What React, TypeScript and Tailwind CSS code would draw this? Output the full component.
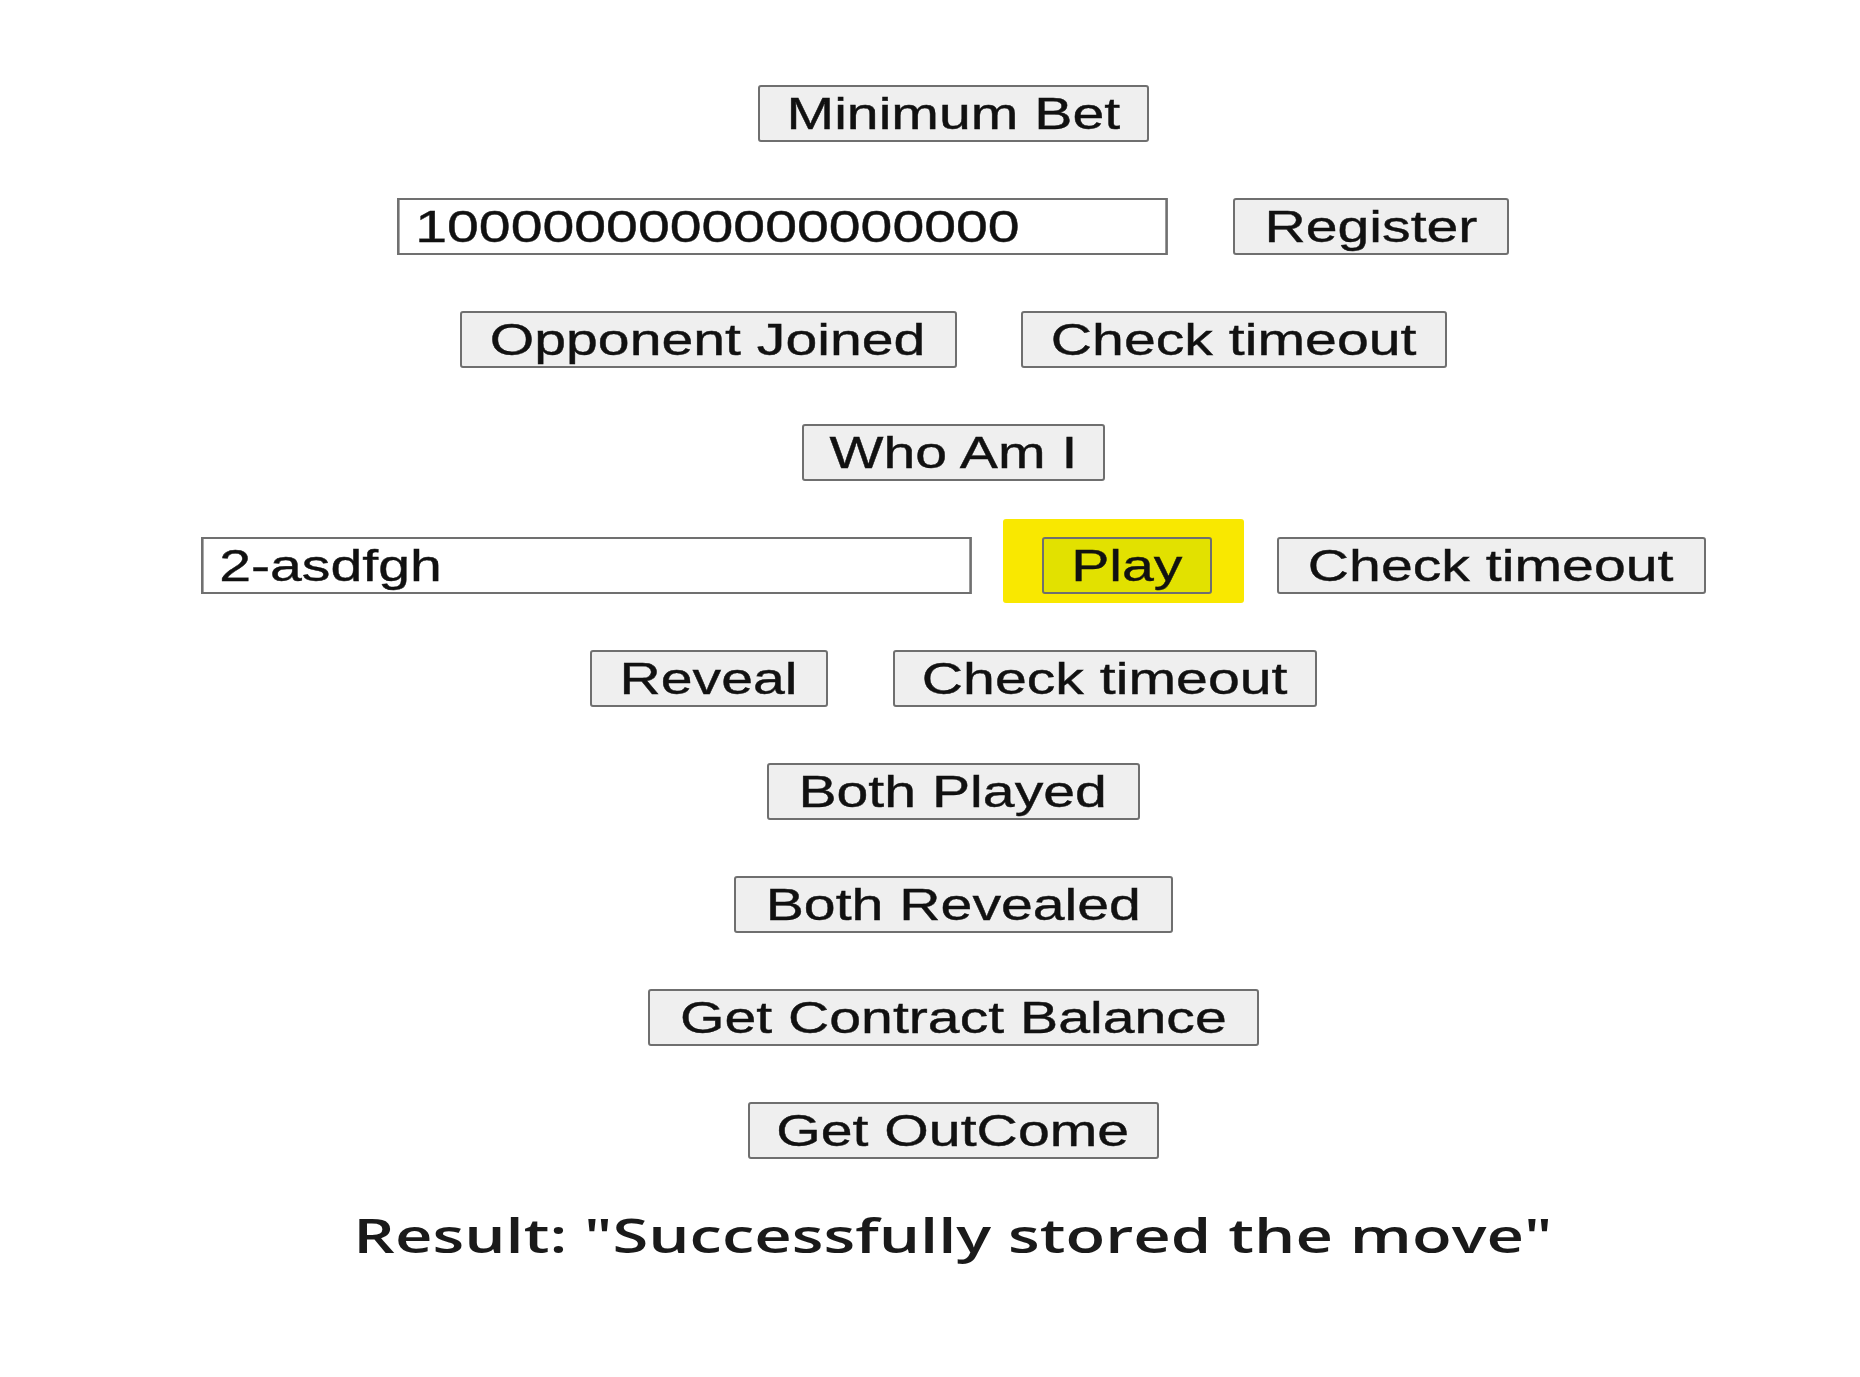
import React from 'react';

type BtnProps = {
  label: string;
  width: string;
  highlighted?: boolean;
};

const Btn: React.FC<BtnProps> = ({ label, width, highlighted }) => (
  <button
    className={`${width} h-[57px] flex items-center justify-center rounded-[3px] border-2 border-[#6f6f6f] ${
      highlighted ? 'bg-[#e2e100]' : 'bg-[#efefef]'
    } text-[44px] leading-none text-[#111] [-webkit-text-stroke:0.4px_#111] font-['Liberation_Sans',Arial,sans-serif]`}
  >
    <span className="inline-block whitespace-nowrap scale-x-[1.3]">{label}</span>
  </button>
);

const Field: React.FC<{ value: string }> = ({ value }) => (
  <div className="w-[771px] h-[57px]">
    <input
      readOnly
      defaultValue={value}
      className="w-[593px] h-[57px] origin-left scale-x-[1.3] border-2 border-[#707070] bg-white pl-[12px] text-[44px] leading-none text-[#111] [-webkit-text-stroke:0.4px_#111] outline-none font-['Liberation_Sans',Arial,sans-serif]"
    />
  </div>
);

export default function App() {
  return (
    <div className="min-h-[1377px] bg-white pt-[85px] pl-[46px] flex flex-col items-center gap-[56px]">
      <Btn label="Minimum Bet" width="w-[391px]" />

      <div className="flex items-center gap-[65px]">
        <Field value="1000000000000000000" />
        <Btn label="Register" width="w-[276px]" />
      </div>

      <div className="flex items-center gap-[64px]">
        <Btn label="Opponent Joined" width="w-[497px]" />
        <Btn label="Check timeout" width="w-[426px]" />
      </div>

      <Btn label="Who Am I" width="w-[303px]" />

      <div className="flex items-center gap-[65px]">
        <Field value="2-asdfgh" />
        {/* highlighter mark around Play */}
        <div className="relative ml-[5px]">
          <span className="absolute -left-[39px] -right-[32px] -top-[18px] -bottom-[9px] bg-[#f9e800] rounded-[3px]" />
          <div className="relative">
            <Btn label="Play" width="w-[170px]" highlighted />
          </div>
        </div>
        <Btn label="Check timeout" width="w-[429px]" />
      </div>

      <div className="flex items-center gap-[65px]">
        <Btn label="Reveal" width="w-[238px]" />
        <Btn label="Check timeout" width="w-[424px]" />
      </div>

      <Btn label="Both Played" width="w-[373px]" />
      <Btn label="Both Revealed" width="w-[439px]" />
      <Btn label="Get Contract Balance" width="w-[611px]" />
      <Btn label="Get OutCome" width="w-[411px]" />

      <div className="h-[40px] flex items-center">
        <span className="inline-block whitespace-nowrap scale-x-[1.385] text-[47px] font-semibold leading-none text-[#1a1a1a] font-['Open_Sans','Noto_Sans',sans-serif]">
          Result: "Successfully stored the move"
        </span>
      </div>
    </div>
  );
}
